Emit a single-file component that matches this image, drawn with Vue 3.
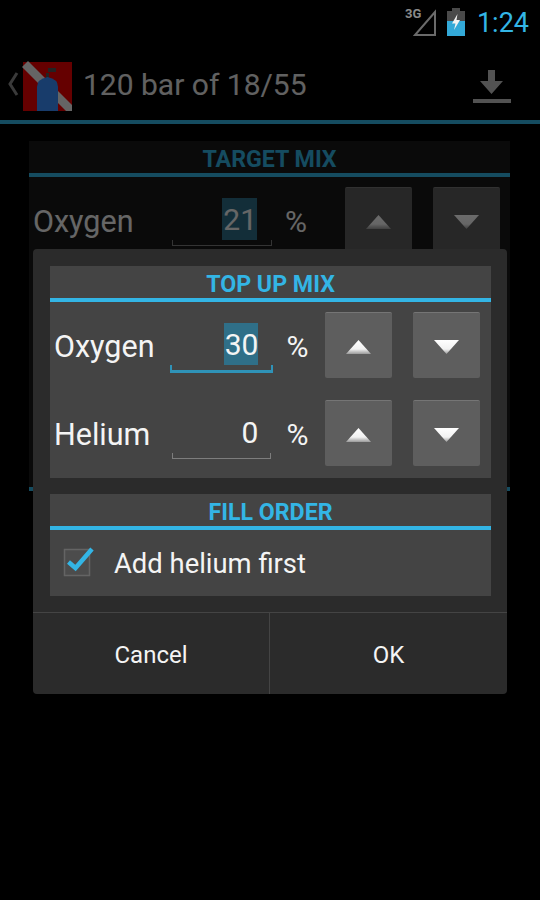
<script setup>
const rows = [
  { label: 'Oxygen', value: '30', focused: true },
  { label: 'Helium', value: '0', focused: false },
]
</script>

<template>
  <div class="screen">
    <header class="status-bar">
      <div class="signal">
        <span class="network">3G</span>
        <svg width="24" height="28" viewBox="0 0 24 28">
          <path d="M22 3 V26 H2 Z" fill="none" stroke="#6a6a6a" stroke-width="2" />
        </svg>
      </div>
      <svg class="battery" width="18" height="28" viewBox="0 0 18 28">
        <rect x="5" y="0" width="8" height="3" fill="#4a4a4a" />
        <rect x="0" y="3" width="18" height="25" fill="#4a4a4a" />
        <rect x="0" y="13" width="18" height="15" fill="#33a9d8" />
        <path d="M10.500 6 L5 15.500 H8.500 L7 22 L13 12 H9.500 Z" fill="#f2f2f2" />
      </svg>
      <span class="clock">1:24</span>
    </header>

    <div class="behind">
      <div class="action-bar">
        <svg class="back" width="12" height="26" viewBox="0 0 12 26">
          <path d="M10 2 L3 13 L10 24" fill="none" stroke="#8a8a8a" stroke-width="3" />
        </svg>
        <svg class="logo" width="50" height="50" viewBox="0 0 50 50">
          <rect x="1" y="1" width="49" height="49" fill="#f00000" />
          <path d="M0 6 L6 0 L50 44 L50 50 L44 50 Z" fill="#f0f0f0" />
          <path d="M24 12 h3 v6 h-3 Z M26 7 h8 v4 h-8 Z" fill="#555" />
          <path d="M15 50 V26 Q15 18 25.500 16 Q36 18 36 26 V50 Z" fill="#3a90ff" />
        </svg>
        <span class="app-title">120 bar of 18/55</span>
        <svg class="download" width="40" height="34" viewBox="0 0 40 34">
          <path d="M16 0 H23 V11 H31 L19.500 24 L8 11 H16 Z" fill="#c4c4c4" />
          <rect x="1" y="29" width="38" height="4" fill="#c4c4c4" />
        </svg>
      </div>
      <div class="action-line"></div>

      <section class="back-section">
        <h2 class="section-title">TARGET MIX</h2>
        <div class="section-line"></div>
        <div class="mix-row">
          <span class="mix-label">Oxygen</span>
          <div class="field">
            <div class="field-value"><span class="selected">21</span></div>
            <div class="field-line"></div>
          </div>
          <span class="percent">%</span>
          <button class="step" type="button">
            <svg width="25" height="14" viewBox="0 0 25 14"><path d="M12.500 0 L25 14 H0 Z" fill="url(#arrow)" /></svg>
          </button>
          <button class="step" type="button">
            <svg width="25" height="14" viewBox="0 0 25 14"><path d="M0 0 H25 L12.500 14 Z" fill="url(#arrow)" /></svg>
          </button>
        </div>
      </section>
      <div class="section-line back-line"></div>
    </div>

    <div class="scrim"></div>

    <div class="dialog">
      <div class="dialog-body">
        <section class="panel">
          <h2 class="section-title">TOP UP MIX</h2>
          <div class="section-line"></div>
          <div v-for="row in rows" :key="row.label" class="mix-row">
            <span class="mix-label">{{ row.label }}</span>
            <div class="field" :class="{ focused: row.focused }">
              <div class="field-value">
                <span :class="{ selected: row.focused }">{{ row.value }}</span>
              </div>
              <div class="field-line"></div>
            </div>
            <span class="percent">%</span>
            <button class="step" type="button">
              <svg width="25" height="14" viewBox="0 0 25 14"><path d="M12.500 0 L25 14 H0 Z" fill="url(#arrow)" /></svg>
            </button>
            <button class="step" type="button">
              <svg width="25" height="14" viewBox="0 0 25 14"><path d="M0 0 H25 L12.500 14 Z" fill="url(#arrow)" /></svg>
            </button>
          </div>
        </section>

        <section class="panel fill-order">
          <h2 class="section-title">FILL ORDER</h2>
          <div class="section-line"></div>
          <div class="check-row">
            <svg class="check" width="32" height="30" viewBox="0 0 32 30">
              <rect x="1.500" y="2.500" width="25" height="26" fill="#4c4c4c" stroke="#646464" stroke-width="1.500" />
              <path d="M5.500 15 L12.500 21 L29 2" fill="none" stroke="#33b5e5" stroke-width="4.500" />
            </svg>
            <span class="check-label">Add helium first</span>
          </div>
        </section>
      </div>

      <div class="dialog-buttons">
        <button type="button" class="dialog-btn">Cancel</button>
        <button type="button" class="dialog-btn">OK</button>
      </div>
    </div>

    <svg class="defs" width="0" height="0">
      <defs>
        <linearGradient id="arrow" x1="0" y1="0" x2="0" y2="1">
          <stop offset="0" stop-color="#ffffff" />
          <stop offset="0.65" stop-color="#f2f2f2" />
          <stop offset="1" stop-color="#9a9a9a" />
        </linearGradient>
      </defs>
    </svg>
  </div>
</template>

<style>
html,
body {
  background: #000;
}
</style>

<style scoped>
.screen {
  position: relative;
  width: 540px;
  height: 900px;
  overflow: hidden;
  background: #000;
  font-family: Roboto, "Liberation Sans", sans-serif;
}

.status-bar {
  display: flex;
  align-items: center;
  justify-content: flex-end;
  height: 48px;
  padding-right: 11px;
  box-sizing: border-box;
}

.signal {
  position: relative;
  display: flex;
  margin-right: 10px;
  margin-top: -3px;
}

.network {
  position: absolute;
  left: -8px;
  top: -3px;
  font-size: 13px;
  font-weight: 700;
  color: #8a8a8a;
}

.battery {
  margin-right: 12px;
  margin-top: -4px;
}

.clock {
  font-size: 27px;
  color: #33b5e5;
  margin-top: -2px;
}

.action-bar {
  display: flex;
  align-items: center;
  height: 72px;
  padding-left: 7px;
  box-sizing: border-box;
}

.logo {
  margin-left: 3px;
  margin-top: 3px;
}

.app-title {
  margin-left: 11px;
  flex: 1;
  font-size: 30px;
  color: #e8e8e8;
}

.download {
  margin-right: 28px;
  margin-top: 5px;
}

.action-line {
  height: 4px;
  background: #33b5e5;
}

.back-section {
  margin: 17px 30px 0 29px;
  height: 346px;
  background: #191919;
}

.back-line {
  margin: 0 30px 0 29px;
}

.section-title {
  margin: 0;
  height: 32px;
  line-height: 37px;
  text-align: center;
  font-size: 23.200px;
  font-weight: 700;
  color: #33b5e5;
}

.section-line {
  height: 4px;
  background: #33b5e5;
}

.mix-row {
  display: flex;
  align-items: center;
  height: 66px;
  margin: 10px 11px 22px 4px;
}

.back-section .mix-row {
  margin: 10px 0 0 4px;
}

.mix-label {
  width: 116px;
  padding-top: 3px;
  font-size: 30.500px;
  color: #f4f4f4;
}

.back-section .mix-label {
  width: 137px;
}

.field {
  width: 104px;
  margin-top: 6px;
}

.field-value {
  height: 42px;
  padding-right: 15px;
  text-align: right;
  font-size: 30px;
  line-height: 44px;
  color: #f4f4f4;
}

.back-section .field-value {
  padding-right: 17px;
}

.selected {
  display: inline-block;
  height: 42px;
  padding-left: 1px;
  background: #2f6f88;
}

.field-line {
  height: 6px;
  margin: 0 2px 2px;
  border: 1px solid #7d7d7d;
  border-top: 0;
  box-sizing: border-box;
}

.focused .field-line {
  margin: 0;
  height: 8px;
  border: 2px solid #2f93b8;
  border-top: 0;
  border-bottom-width: 3px;
}

.percent {
  width: 52px;
  padding-left: 13px;
  padding-top: 3px;
  box-sizing: border-box;
  font-size: 30px;
  color: #f4f4f4;
}

.back-section .percent {
  width: 71px;
  padding-left: 11px;
}

.step {
  display: flex;
  align-items: center;
  justify-content: center;
  width: 67px;
  height: 66px;
  padding: 2px 0 0;
  border: 0;
  border-top: 1px solid #757575;
  border-radius: 2px;
  background: #5e5e5e;
}

.step + .step {
  margin-left: 21px;
}

.scrim {
  position: absolute;
  inset: 48px 0 0;
  background: rgba(0, 0, 0, 0.58);
}

.dialog {
  position: absolute;
  left: 33px;
  top: 249px;
  display: flex;
  flex-direction: column;
  width: 474px;
  height: 445px;
  border-radius: 4px;
  background: #2b2b2b;
}

.dialog-body {
  flex: 1;
  padding: 17px 16px 0 17px;
}

.panel {
  height: 212px;
  background: #444;
}

.fill-order {
  height: 102px;
  margin-top: 16px;
}

.check-row {
  display: flex;
  align-items: center;
  height: 66px;
  padding-left: 13px;
}

.check {
  margin-top: -2px;
}

.check-label {
  margin-left: 19px;
  padding-top: 2px;
  font-size: 27.400px;
  color: #f4f4f4;
}

.dialog-buttons {
  display: flex;
  height: 82px;
  border-top: 1px solid #444;
  box-sizing: border-box;
}

.dialog-btn {
  flex: 1;
  padding: 2px 0 0;
  border: 0;
  background: transparent;
  font-family: inherit;
  font-size: 24px;
  color: #f4f4f4;
}

.dialog-btn:first-child {
  flex: 0 0 237px;
  border-right: 1px solid #444;
}

.defs {
  position: absolute;
}
</style>
